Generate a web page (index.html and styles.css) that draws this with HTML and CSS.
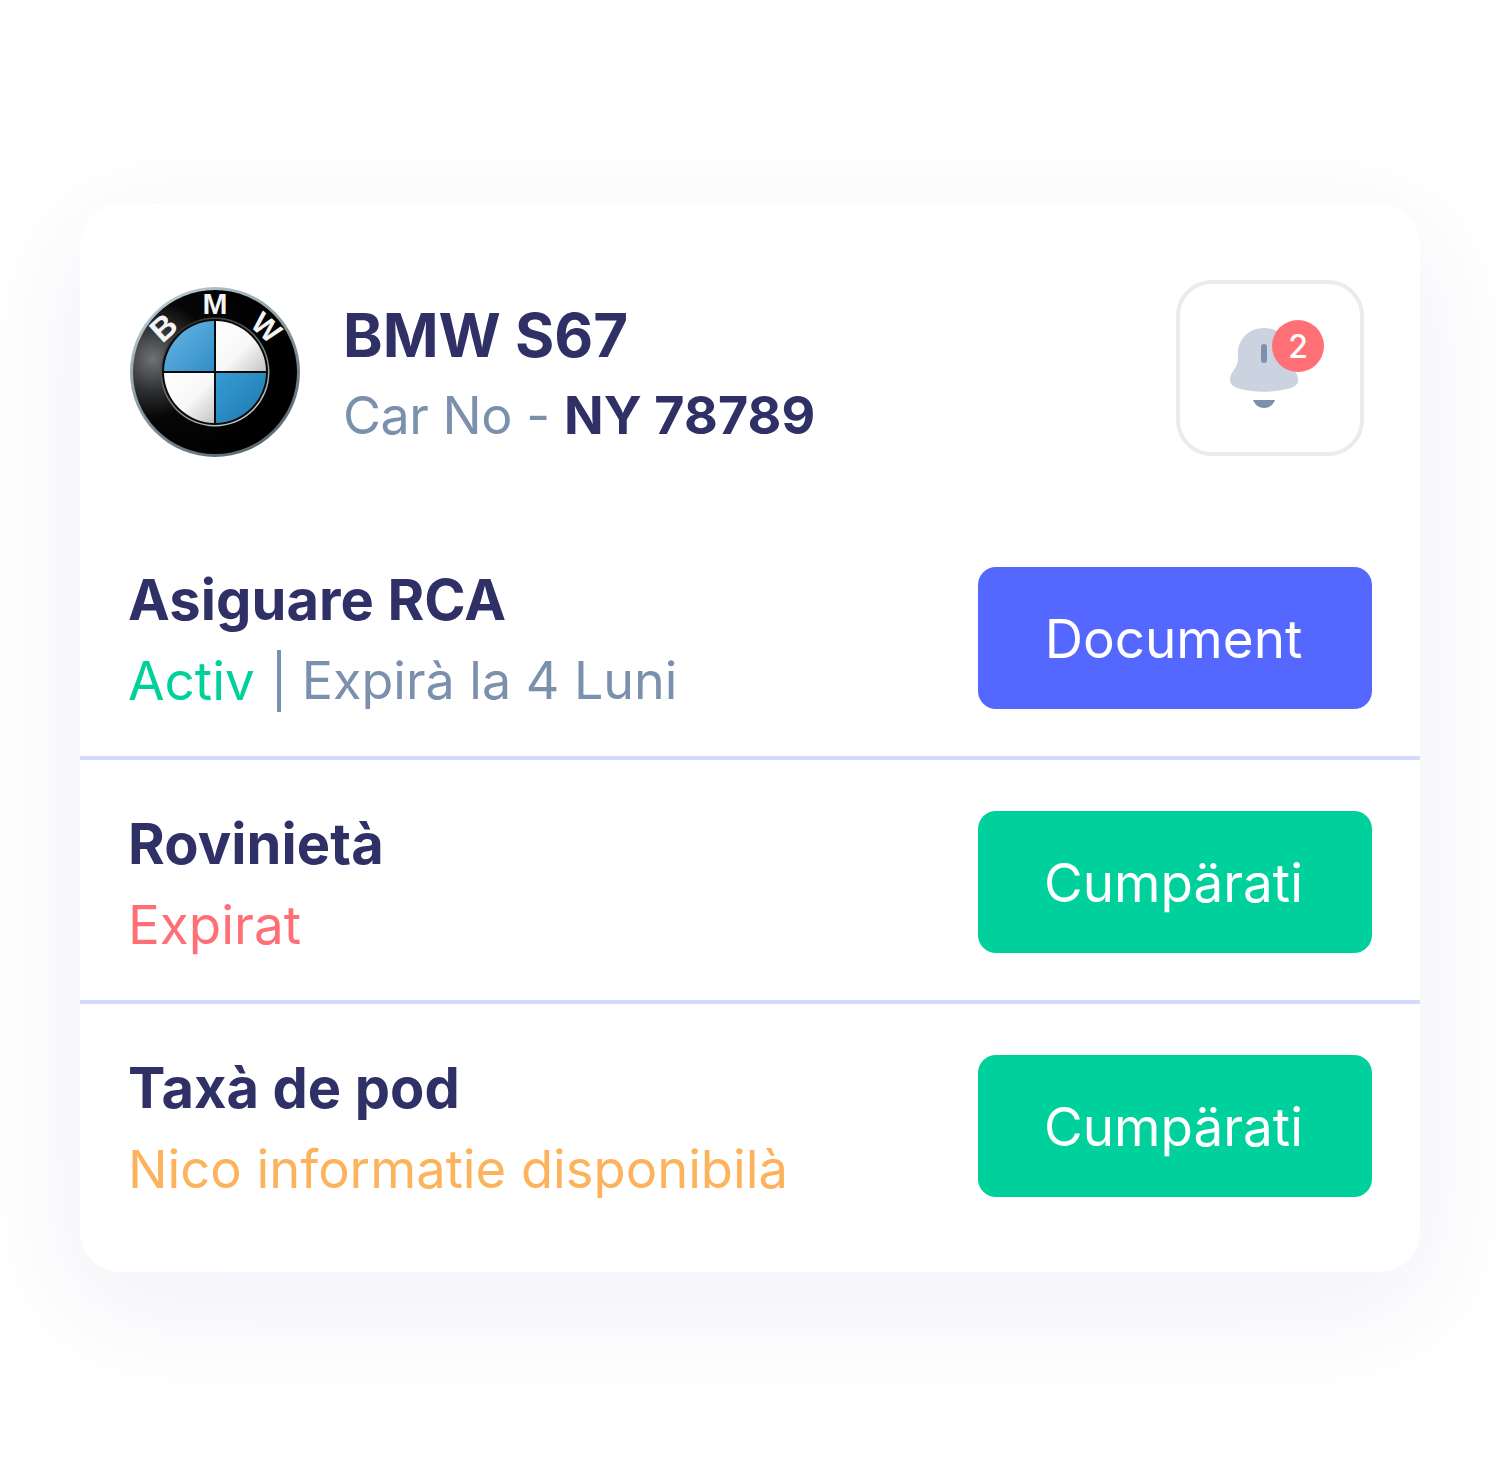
FILE: index.html
```html
<!DOCTYPE html>
<html lang="ro">
<head>
<meta charset="utf-8">
<title>BMW S67</title>
<link rel="stylesheet" href="styles.css">
</head>
<body>
<main class="card">
  <header class="head">
    <div class="car">
      <svg class="logo" viewBox="0 0 170 170" width="170" height="170" aria-hidden="true">
        <defs>
          <linearGradient id="rim" x1="0.2" y1="0" x2="0.8" y2="1">
            <stop offset="0" stop-color="#bccdd4"/><stop offset="0.5" stop-color="#84959d"/><stop offset="1" stop-color="#56646b"/>
          </linearGradient>
          <linearGradient id="silver" x1="0.2" y1="0" x2="0.8" y2="1">
            <stop offset="0" stop-color="#2a2a2a"/><stop offset="0.6" stop-color="#7d8a90"/><stop offset="1" stop-color="#d5dde0"/>
          </linearGradient>
          <radialGradient id="black" cx="0.12" cy="0.42" r="0.72">
            <stop offset="0" stop-color="#6f7172"/><stop offset="0.28" stop-color="#2d2e30"/><stop offset="0.5" stop-color="#060606"/><stop offset="1" stop-color="#000"/>
          </radialGradient>
          <linearGradient id="blue1" x1="0" y1="0" x2="1" y2="1">
            <stop offset="0" stop-color="#6cb7e6"/><stop offset="1" stop-color="#2f8fc8"/>
          </linearGradient>
          <linearGradient id="blue2" x1="0" y1="0" x2="1" y2="1">
            <stop offset="0" stop-color="#369cd4"/><stop offset="1" stop-color="#1d79ad"/>
          </linearGradient>
          <linearGradient id="white1" x1="0" y1="0" x2="1" y2="1">
            <stop offset="0" stop-color="#ffffff"/><stop offset="0.55" stop-color="#f8f8f8"/><stop offset="1" stop-color="#c4c4c4"/>
          </linearGradient>
        </defs>
        <circle cx="85" cy="85" r="85" fill="url(#rim)"/>
        <circle cx="85" cy="85" r="82" fill="url(#black)"/>
        <circle cx="85" cy="85" r="54.500" fill="url(#silver)"/>
        <circle cx="85" cy="85" r="53" fill="#0a0a0a"/>
        <path d="M84 34A51 51 0 0 0 34 84H84Z" fill="url(#blue1)"/>
        <path d="M86 34A51 51 0 0 1 136 84H86Z" fill="url(#white1)"/>
        <path d="M84 86H34A51 51 0 0 0 84 136Z" fill="url(#white1)"/>
        <path d="M86 86V136A51 51 0 0 0 136 86Z" fill="url(#blue2)"/>
        <text class="logo-letter" x="85" y="27">M</text>
        <text class="logo-letter logo-b" transform="translate(33 40) rotate(-42)" x="0" y="12">B</text>
        <text class="logo-letter" transform="translate(137 40) rotate(42)" x="0" y="11">W</text>
      </svg>
      <div class="car-text">
        <h1 class="car-name">BMW S67</h1>
        <p class="car-no"><span class="car-label">Car No - </span><strong>NY 78789</strong></p>
      </div>
    </div>
    <div class="bell-box">
      <svg class="bell" viewBox="0 0 72 90" width="72" height="90" aria-hidden="true">
        <path d="M35 9C19 9 9 21 9 34V40C9 45 6 49 3 54C-1 61 1 66 8 69C25 74 45 74 62 69C70 66 71 61 67 54C64 49 61 45 61 40V34C61 21 51 9 35 9Z" fill="#cbd3e1"/>
        <rect x="32" y="25" width="6" height="19" rx="3" fill="#7b90ad"/>
        <path d="M24 81H46C44 86 40 89 35 89C30 89 26 86 24 81Z" fill="#7b90ad"/>
      </svg>
      <span class="badge">2</span>
    </div>
  </header>

  <section class="row row-first">
    <div>
      <h2 class="row-title">Asiguare RCA</h2>
      <p class="row-sub"><span class="green">Activ</span><span class="bar"></span><span class="grey">Expirà la 4 Luni</span></p>
    </div>
    <a class="btn btn-blue">Document</a>
  </section>
  <section class="row">
    <div>
      <h2 class="row-title">Rovinietà</h2>
      <p class="row-sub red">Expirat</p>
    </div>
    <a class="btn btn-green">Cumpärati</a>
  </section>
  <section class="row row-last">
    <div>
      <h2 class="row-title">Taxà de pod</h2>
      <p class="row-sub orange">Nico informatie disponibilà</p>
    </div>
    <a class="btn btn-green">Cumpärati</a>
  </section>
</main>
</body>
</html>
```
FILE: styles.css
```css
* { box-sizing: border-box; }
html, body { margin: 0; background: #fff; }
body { width: 1500px; height: 1480px; padding: 204px 80px 0; overflow: hidden; font-family: Inter, "Liberation Sans", sans-serif; }
h1, h2, p { margin: 0; }
.card { width: 1340px; height: 1068px; background: #fff; border-radius: 40px; box-shadow: 0 32px 120px rgba(70, 70, 170, 0.08); }
.head { height: 303px; padding: 76px 56px 0 50px; display: flex; justify-content: space-between; align-items: flex-start; }
.car { display: flex; align-items: flex-start; gap: 44px; padding-top: 7px; }
.logo { display: block; flex: none; }
.logo-letter { font: 700 30px "Liberation Sans", Arial, sans-serif; fill: #f4f4f4; text-anchor: middle; }
.logo-b { font-size: 33px; }
.car-text { padding-top: 12px; margin-left: -1px; }
.car-name { font-size: 60px; line-height: 72px; font-weight: 700; color: #2f3066; }
.car-no { margin-top: 14px; font-size: 52px; line-height: 62px; color: #7a90ac; }
.car-label { letter-spacing: -0.45px; white-space: pre; }
.car-no strong { font-weight: 700; color: #2f3066; letter-spacing: 0.15px; }
.bell-box { position: relative; width: 188px; height: 176px; margin-left: auto; border: 4px solid #ebebeb; border-radius: 36px; background: #fff; padding: 35px 0 0 49px; }
.bell { display: block; }
.badge { position: absolute; left: 92px; top: 36px; width: 52px; height: 52px; border-radius: 50%; background: #ff7076; color: #fff; font-size: 32px; font-weight: 500; display: flex; align-items: center; justify-content: center; }
.row { height: 244px; padding: 51px 48px 0; display: flex; justify-content: space-between; align-items: flex-start; border-bottom: 4px solid #d4daff; }
.row-first { height: 253px; padding-top: 60px; }
.row-last { height: 268px; border-bottom: 0; }
.row-title { font-size: 56px; line-height: 66px; font-weight: 700; color: #2f3066; letter-spacing: 0.1px; }
.row-sub { margin-top: 17px; font-size: 52.5px; line-height: 62px; display: flex; align-items: center; }
.green { color: #00d09c; font-size: 53px; }
.grey { color: #7a90ac; font-size: 52px; }
.red { color: #ff7076; font-size: 53px; }
.orange { color: #fdb25c; }
.bar { width: 4px; height: 62px; background: #7a90ac; margin: 0 21px 0 22px; }
.btn { width: 394px; height: 142px; padding: 2px 3px 0 0; border-radius: 18px; color: #fff; font-size: 53px; display: flex; align-items: center; justify-content: center; }
.btn-blue { background: #5468ff; }
.btn-green { background: #00d09c; }
```
